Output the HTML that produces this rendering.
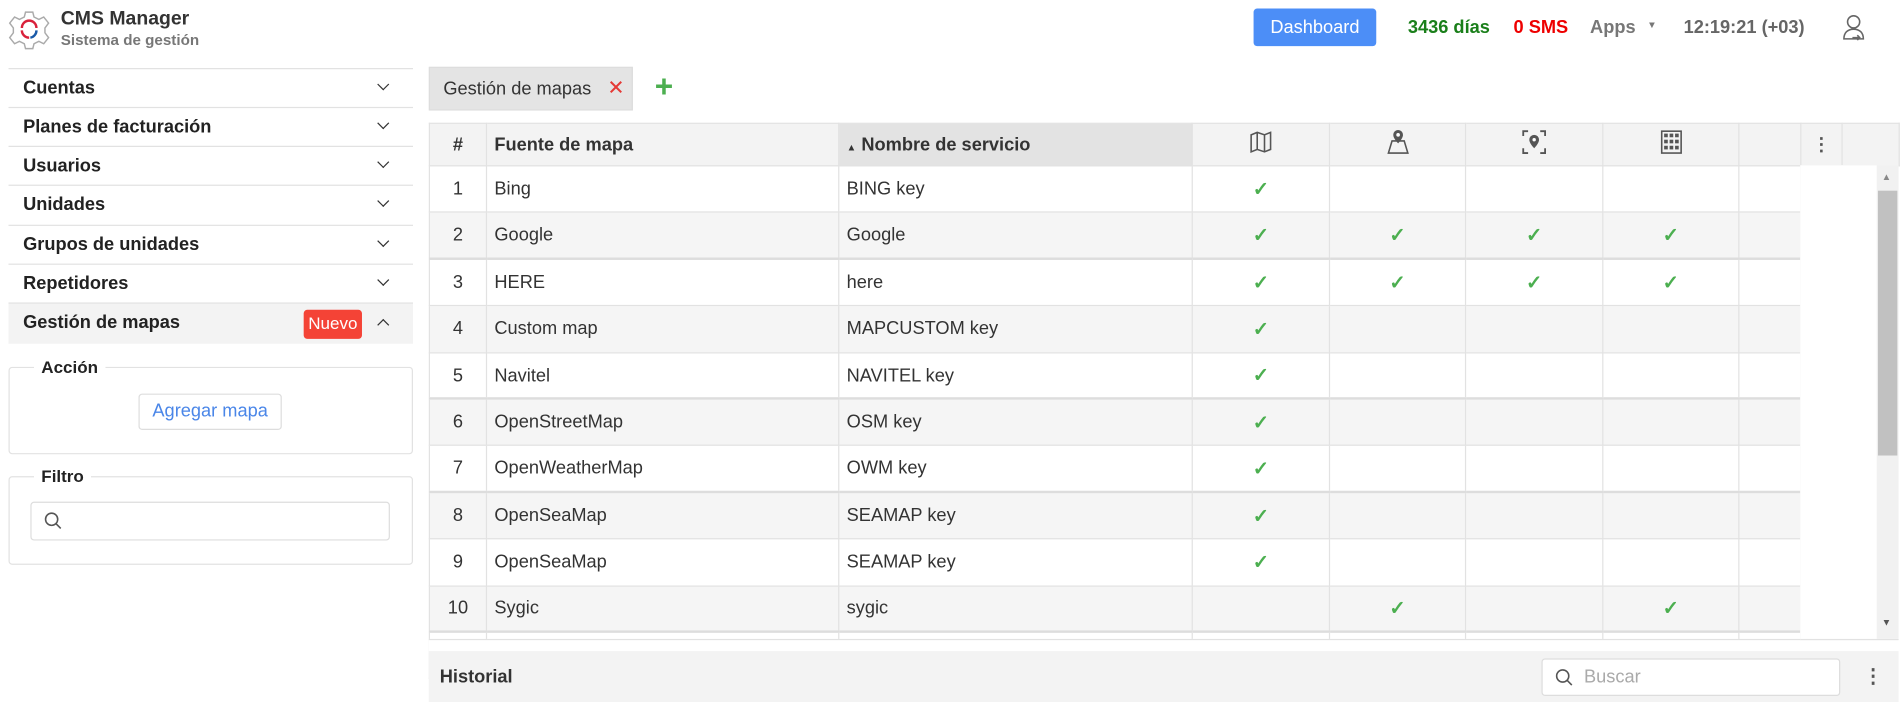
<!DOCTYPE html>
<html><head><meta charset="utf-8"><style>
html,body{margin:0;padding:0;width:1901px;height:701px;overflow:hidden;background:#fff;font-family:"Liberation Sans",Arial,sans-serif;}
#w{position:absolute;left:0;top:0;width:1565px;height:577px;transform:scale(1.2147);transform-origin:0 0;}
.a{position:absolute;}
.side{left:7px;width:333px;height:32px;border-top:1px solid #e2e2e2;box-sizing:border-box;font-weight:bold;font-size:15px;color:#222;}
.side span{position:absolute;left:12px;top:7px;}
.chev{position:absolute;left:305px;top:9px;width:6px;height:6px;border-right:1.6px solid #333;border-bottom:1.6px solid #333;transform:rotate(45deg);}
fieldset{position:absolute;margin:0;padding:0;border:1px solid #e2e2e2;border-radius:3px;}
legend{margin-left:20px;padding:0 6px;font-weight:bold;font-size:14px;color:#222;}
table{border-collapse:collapse;position:absolute;left:353px;top:101px;font-size:15px;color:#333;table-layout:fixed;}
td,th{border:1px solid #e2e2e2;height:38.4px;padding:0 6px;box-sizing:border-box;}
th{background:#f3f3f3;font-weight:bold;text-align:left;height:35px;}
tr.e td{background:#f5f5f5;}
tr.t td{border-top:2px solid #ddd;}
.c{text-align:center;}
.ck{color:#4caf50;font-size:16px;font-weight:bold;}
</style></head><body><div id="w">
<svg class="a" style="left:7px;top:8px" width="34" height="34" viewBox="0 0 34 34"><path d="M14 2h6l1 4 4 2 4-2 4 5-3 4v4l3 4-4 5-4-2-4 2-1 4h-6l-1-4-4-2-4 2-4-5 3-4v-4l-3-4 4-5 4 2 4-2z" fill="none" stroke="#aaa" stroke-width="1.2"/><path d="M11 15a6 6 0 0 1 12 0" fill="none" stroke="#d9213b" stroke-width="2"/><path d="M11 17a6 6 0 0 0 6 6" fill="none" stroke="#d9213b" stroke-width="2"/><path d="M23 17a6 6 0 0 1-5 6" fill="none" stroke="#1a5aa8" stroke-width="2"/></svg>
<div class="a" style="left:50px;top:7px;font-weight:bold;font-size:16px;color:#333">CMS Manager</div>
<div class="a" style="left:50px;top:26px;font-weight:bold;font-size:12.5px;color:#777">Sistema de gestión</div>
<div class="a" style="left:1032px;top:7px;width:101px;height:31px;background:#4c8ef7;border-radius:3px;color:#fff;font-size:15px;text-align:center;line-height:31px">Dashboard</div>
<div class="a" style="left:1159px;top:14px;font-weight:bold;font-size:15px;color:#1a7f1a">3436 días</div>
<div class="a" style="left:1246px;top:14px;font-weight:bold;font-size:15px;color:#e00">0 SMS</div>
<div class="a" style="left:1309px;top:14px;font-weight:bold;font-size:15px;color:#777">Apps</div>
<div class="a" style="left:1356px;top:16px;font-size:8px;color:#777">▼</div>
<div class="a" style="left:1386px;top:14px;font-weight:bold;font-size:15px;color:#666">12:19:21 (+03)</div>
<svg class="a" style="left:1516px;top:11px" width="20" height="24" viewBox="0 0 20 24"><circle cx="10" cy="7" r="5" fill="none" stroke="#666" stroke-width="1.3"/><path d="M2 21c0-5 3-8 8-8s8 3 8 8z" fill="none" stroke="#666" stroke-width="1.3"/><path d="M9 20h6m-2-2 2 2-2 2" stroke="#666" fill="none" stroke-width="1.3"/></svg>

<div class="a side" style="top:56px"><span>Cuentas</span><i class="chev"></i></div>
<div class="a side" style="top:88px"><span>Planes de facturación</span><i class="chev"></i></div>
<div class="a side" style="top:120px"><span>Usuarios</span><i class="chev"></i></div>
<div class="a side" style="top:152px"><span>Unidades</span><i class="chev"></i></div>
<div class="a side" style="top:185px"><span>Grupos de unidades</span><i class="chev"></i></div>
<div class="a side" style="top:217px"><span>Repetidores</span><i class="chev"></i></div>
<div class="a side" style="top:249px;height:34px;background:#f3f3f3"><span>Gestión de mapas</span><div class="a" style="left:243px;top:5px;width:48px;height:24px;background:#f44336;border-radius:3px;color:#fff;font-weight:normal;font-size:14px;text-align:center;line-height:22px">Nuevo</div><i class="chev" style="transform:rotate(225deg);top:14px"></i></div>
<fieldset style="left:7px;top:294px;width:331px;height:78px"><legend>Acción</legend>
<div class="a" style="left:106px;top:14px;width:116px;height:28px;border:1px solid #ddd;border-radius:3px;color:#4a86e8;font-size:15px;text-align:center;line-height:28px">Agregar mapa</div></fieldset>
<fieldset style="left:7px;top:384px;width:331px;height:79px"><legend>Filtro</legend>
<div class="a" style="left:17px;top:13px;width:294px;height:30px;border:1px solid #ddd;border-radius:3px"><svg class="a" style="left:10px;top:7px" width="16" height="16"><circle cx="6.5" cy="6.5" r="5" fill="none" stroke="#555" stroke-width="1.3"/><path d="M10 10l4 4" stroke="#555" stroke-width="1.3"/></svg></div></fieldset>

<div class="a" style="left:353px;top:55px;width:168px;height:36px;background:#e4e4e4;border:1px solid #ddd;box-sizing:border-box"><span class="a" style="left:11px;top:9px;font-size:15px;color:#333">Gestión de mapas</span><span class="a" style="left:146px;top:7px;font-size:17px;color:#e53935">✕</span></div>
<div class="a" style="left:539px;top:56px;font-size:26px;font-weight:bold;color:#4caf50;line-height:30px">+</div>

<table style="width:1210px">
<colgroup><col style="width:47px"><col style="width:290px"><col style="width:291px"><col style="width:113px"><col style="width:112px"><col style="width:113px"><col style="width:112px"><col style="width:51px"><col style="width:34px"><col style="width:47px"></colgroup>
<tr><th class="c" style="font-weight:bold">#</th><th>Fuente de mapa</th><th style="background:#e3e3e3"><span style="font-size:8px">▲</span> Nombre de servicio</th>
<th class="c"><svg width="20" height="18" viewBox="0 0 20 18"><path d="M2 3l5-2 6 2 5-2v14l-5 2-6-2-5 2z M7 1v14 M13 3v14" fill="none" stroke="#555" stroke-width="1.3"/></svg></th>
<th class="c"><svg width="22" height="22" viewBox="0 0 22 22"><path d="M3 20l3-10h10l3 10z" fill="none" stroke="#555" stroke-width="1.3"/><path d="M11 1a4 4 0 0 1 4 4c0 3-4 7-4 7s-4-4-4-7a4 4 0 0 1 4-4z" fill="#555"/><circle cx="11" cy="5" r="1.5" fill="#fff"/></svg></th>
<th class="c"><svg width="22" height="22" viewBox="0 0 22 22"><path d="M2 6V2h4M16 2h4v4M20 16v4h-4M6 20H2v-4" fill="none" stroke="#555" stroke-width="1.5"/><path d="M11 5a4 4 0 0 1 4 4c0 3-4 7-4 7s-4-4-4-7a4 4 0 0 1 4-4z" fill="#555"/><circle cx="11" cy="9" r="1.4" fill="#fff"/></svg></th>
<th class="c"><svg width="18" height="20" viewBox="0 0 18 20"><rect x="1" y="1" width="16" height="18" fill="none" stroke="#555" stroke-width="1.3"/><g fill="#555"><rect x="3" y="3" width="3" height="3"/><rect x="7.5" y="3" width="3" height="3"/><rect x="12" y="3" width="3" height="3"/><rect x="3" y="8" width="3" height="3"/><rect x="7.5" y="8" width="3" height="3"/><rect x="12" y="8" width="3" height="3"/><rect x="3" y="13" width="3" height="3"/><rect x="7.5" y="13" width="3" height="3"/><rect x="12" y="13" width="3" height="3"/></g></svg></th>
<th></th><th class="c" style="color:#555">⋮</th><th></th></tr>
<tr><td class="c">1</td><td>Bing</td><td>BING key</td><td class="c ck">✓</td><td></td><td></td><td></td><td></td></tr>
<tr class="e"><td class="c">2</td><td>Google</td><td>Google</td><td class="c ck">✓</td><td class="c ck">✓</td><td class="c ck">✓</td><td class="c ck">✓</td><td></td></tr>
<tr class="t"><td class="c">3</td><td>HERE</td><td>here</td><td class="c ck">✓</td><td class="c ck">✓</td><td class="c ck">✓</td><td class="c ck">✓</td><td></td></tr>
<tr class="e"><td class="c">4</td><td>Custom map</td><td>MAPCUSTOM key</td><td class="c ck">✓</td><td></td><td></td><td></td><td></td></tr>
<tr><td class="c">5</td><td>Navitel</td><td>NAVITEL key</td><td class="c ck">✓</td><td></td><td></td><td></td><td></td></tr>
<tr class="e t"><td class="c">6</td><td>OpenStreetMap</td><td>OSM key</td><td class="c ck">✓</td><td></td><td></td><td></td><td></td></tr>
<tr><td class="c">7</td><td>OpenWeatherMap</td><td>OWM key</td><td class="c ck">✓</td><td></td><td></td><td></td><td></td></tr>
<tr class="e t"><td class="c">8</td><td>OpenSeaMap</td><td>SEAMAP key</td><td class="c ck">✓</td><td></td><td></td><td></td><td></td></tr>
<tr><td class="c">9</td><td>OpenSeaMap</td><td>SEAMAP key</td><td class="c ck">✓</td><td></td><td></td><td></td><td></td></tr>
<tr class="e"><td class="c">10</td><td>Sygic</td><td>sygic</td><td></td><td class="c ck">✓</td><td></td><td class="c ck">✓</td><td></td></tr>
<tr class="t"><td></td><td></td><td></td><td></td><td></td><td></td><td></td><td></td></tr>
</table>
<div class="a" style="left:353px;top:526px;width:1210px;height:10px;background:#fff;border-top:1px solid #e2e2e2"></div>
<div class="a" style="left:1482px;top:136px;width:81px;height:390px;background:#fff;border-bottom:1px solid #e2e2e2"></div>
<div class="a" style="left:1545px;top:136px;width:18px;height:390px;background:#f1f1f1"></div>
<div class="a" style="left:1546px;top:157px;width:16px;height:218px;background:#c1c1c1"></div>
<div class="a" style="left:1549px;top:141px;font-size:8px;color:#888">▲</div>
<div class="a" style="left:1549px;top:508px;font-size:8px;color:#555">▼</div>
<div class="a" style="left:353px;top:536px;width:1210px;height:42px;background:#f3f3f3"></div>
<div class="a" style="left:362px;top:549px;font-weight:bold;font-size:15px;color:#333">Historial</div>
<div class="a" style="left:1269px;top:542px;width:246px;height:31px;background:#fff;border:1px solid #ddd;border-radius:3px;box-sizing:border-box"><svg class="a" style="left:10px;top:7px" width="16" height="16"><circle cx="6.5" cy="6.5" r="5" fill="none" stroke="#555" stroke-width="1.3"/><path d="M10 10l4 4" stroke="#555" stroke-width="1.3"/></svg><span class="a" style="left:34px;top:6px;font-size:15px;color:#aaa">Buscar</span></div>
<div class="a" style="left:1534px;top:547px;font-size:16px;color:#555;font-weight:bold">⋮</div>
</div></body></html>
